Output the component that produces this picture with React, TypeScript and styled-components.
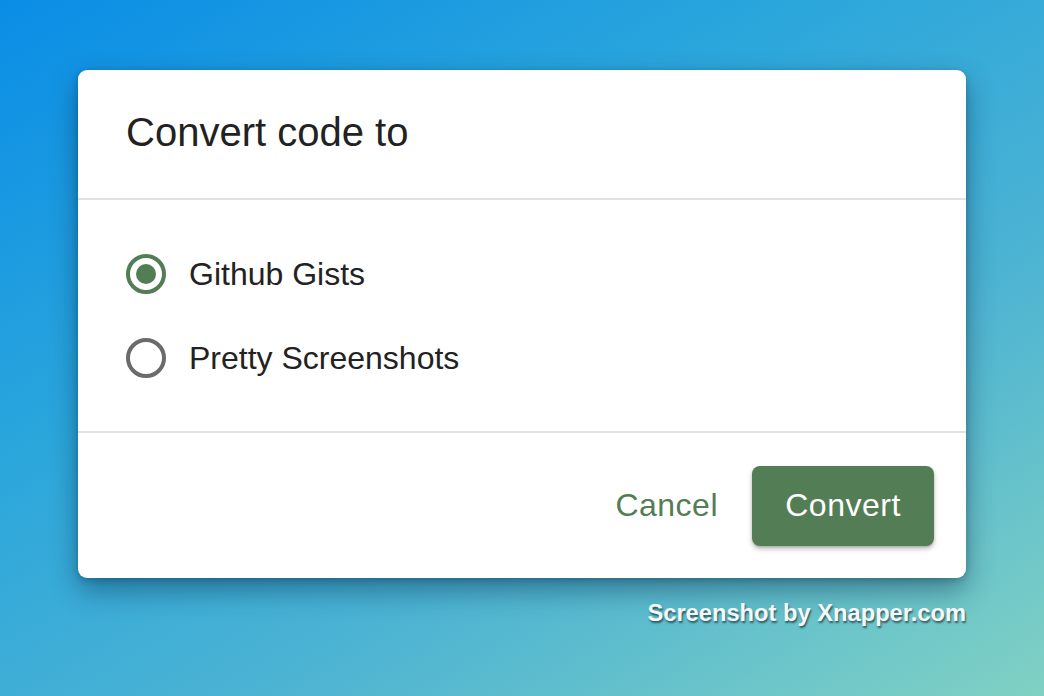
import React, { useState } from 'react';
import styled, { createGlobalStyle } from 'styled-components';

const GlobalStyle = createGlobalStyle`
  html, body {
    margin: 0;
    padding: 0;
  }
  body {
    font-family: "Liberation Sans", Arial, sans-serif;
  }
`;

const green = '#537d55';

const options = ['Github Gists', 'Pretty Screenshots'];

const App = () => {
  const [selected, setSelected] = useState(0);

  return (
    <Page>
      <GlobalStyle />
      <Dialog>
        <Header>
          <Title>Convert code to</Title>
        </Header>
        <Body>
          {options.map((label, i) => (
            <Option key={label} onClick={() => setSelected(i)}>
              <Radio checked={selected === i} />
              <OptionLabel>{label}</OptionLabel>
            </Option>
          ))}
        </Body>
        <Footer>
          <TextButton>Cancel</TextButton>
          <PrimaryButton>Convert</PrimaryButton>
        </Footer>
      </Dialog>
      <Watermark>Screenshot by Xnapper.com</Watermark>
    </Page>
  );
};

const Page = styled.div`
  width: 1044px;
  height: 696px;
  box-sizing: border-box;
  padding: 70px 78px 0;
  display: flex;
  flex-direction: column;
  align-items: stretch;
  background: linear-gradient(150deg, #0a8de6 0%, #2aa6dc 35%, #4cb3d3 65%, #80d1c3 100%);
  overflow: hidden;
`;

const Dialog = styled.div`
  width: 888px;
  background: #ffffff;
  border-radius: 9px;
  box-shadow: 0 12px 28px rgba(0, 40, 70, 0.45), 0 2px 6px rgba(0, 0, 0, 0.2);
  display: flex;
  flex-direction: column;
`;

const Header = styled.div`
  height: 128px;
  display: flex;
  align-items: center;
  padding: 0 48px;
  border-bottom: 2px solid #e2e2e2;
`;

const Title = styled.h2`
  margin: 0;
  margin-top: -4px;
  font-size: 40px;
  font-weight: 400;
  color: #222222;
`;

const Body = styled.div`
  padding: 32px 48px 31px;
  display: flex;
  flex-direction: column;
  border-bottom: 2px solid #e2e2e2;
`;

const Option = styled.label`
  height: 84px;
  display: flex;
  align-items: center;
  gap: 23px;
  cursor: pointer;
`;

const Radio = styled.span<{ checked: boolean }>`
  width: 40px;
  height: 40px;
  box-sizing: border-box;
  border-radius: 50%;
  border: 4px solid ${(p) => (p.checked ? green : '#6b6b6b')};
  display: flex;
  align-items: center;
  justify-content: center;
  flex-shrink: 0;

  &::after {
    content: '';
    width: 20px;
    height: 20px;
    border-radius: 50%;
    background: ${green};
    display: ${(p) => (p.checked ? 'block' : 'none')};
  }
`;

const OptionLabel = styled.span`
  font-size: 32px;
  color: #222222;
`;

const Footer = styled.div`
  height: 145px;
  box-sizing: border-box;
  padding: 0 32px 0 0;
  display: flex;
  align-items: center;
  justify-content: flex-end;
  gap: 18px;
`;

const TextButton = styled.button`
  border: none;
  background: none;
  font-family: inherit;
  font-size: 32px;
  letter-spacing: 0.5px;
  color: ${green};
  padding: 0 16px;
  height: 80px;
  cursor: pointer;
`;

const PrimaryButton = styled.button`
  width: 182px;
  height: 80px;
  border: none;
  border-radius: 8px;
  background: ${green};
  color: #ffffff;
  font-family: inherit;
  font-size: 32px;
  letter-spacing: 0.5px;
  box-shadow: 0 3px 5px rgba(0, 0, 0, 0.25), 0 1px 2px rgba(0, 0, 0, 0.15);
  cursor: pointer;
`;

const Watermark = styled.div`
  align-self: flex-end;
  margin-top: 22px;
  font-size: 23.7px;
  font-weight: 700;
  color: #f4f8fa;
  text-shadow: 1px 2px 2px rgba(0, 0, 0, 0.55);
`;

export default App;
